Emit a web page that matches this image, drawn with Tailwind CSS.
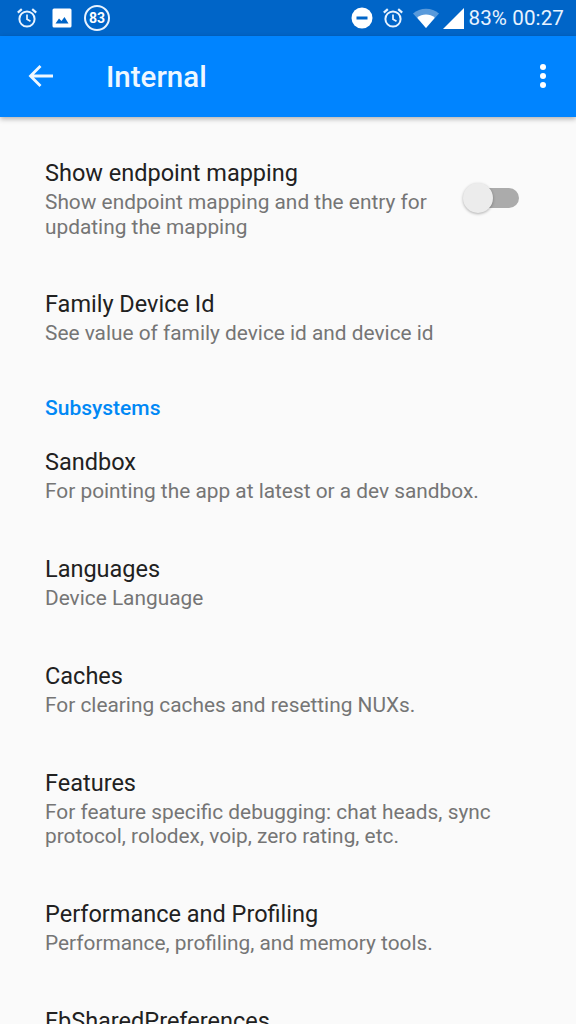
<!DOCTYPE html>
<html>
<head>
<meta charset="utf-8">
<script src="https://cdn.jsdelivr.net/npm/@tailwindcss/browser@4"></script>
</head>
<body class="m-0 bg-[#fafafa]">
<div class="w-[576px] h-[1024px] overflow-hidden flex flex-col font-['Roboto',sans-serif] bg-[#fafafa]">
  <div class="h-[36px] bg-[#0065c8] flex items-center justify-between pl-[16px] pr-[12px] shrink-0 text-white">
    <div class="flex items-center">
      <svg class="w-[22px] h-[22px]" viewBox="0 0 22 22" fill="none" stroke="#e8f3ff"><circle cx="11" cy="12" r="7.6" stroke-width="2"/><path d="M11 7.5V12.2L14.5 14.3" stroke-width="1.7"/><path d="M1.8 5.6L5.8 2.2M20.2 5.6L16.2 2.2" stroke-width="2.2"/></svg>
      <svg class="w-[20px] h-[20px] ml-[14px]" viewBox="0 0 20 20"><rect x="0.5" y="0.5" width="19" height="19" rx="1.5" fill="#fff"/><path d="M3.5 15.5L7 10.5L9.5 13L12.5 9L16.5 15.5Z" fill="#0065c8"/></svg>
      <div class="w-[26px] h-[26px] ml-[12px] rounded-full border-[2px] border-[#e8f3ff] flex items-center justify-center text-[14px] font-bold leading-none">83</div>
    </div>
    <div class="flex items-center">
      <svg class="w-[22px] h-[22px]" viewBox="0 0 22 22"><circle cx="11" cy="11" r="10.5" fill="#fff"/><rect x="5.5" y="9.5" width="11" height="3" fill="#0065c8"/></svg>
      <svg class="w-[22px] h-[22px] ml-[9px]" viewBox="0 0 22 22" fill="none" stroke="#e8f3ff"><circle cx="11" cy="12" r="7.6" stroke-width="2"/><path d="M11 7.5V12.2L14.5 14.3" stroke-width="1.7"/><path d="M1.8 5.6L5.8 2.2M20.2 5.6L16.2 2.2" stroke-width="2.2"/></svg>
      <svg class="w-[26px] h-[20px] ml-[9px]" viewBox="0 0 26 20"><path d="M0 5.5C7 -0.8 19 -0.8 26 5.5L13 20Z" fill="#fff" fill-opacity="0.35"/><path d="M4.2 9.8C9 5.5 17 5.5 21.8 9.8L13 20Z" fill="#fff"/></svg>
      <svg class="w-[21px] h-[21px] ml-[4px]" viewBox="0 0 21 21"><path d="M0 21L21 0V21Z" fill="#fff"/></svg>
      <span class="ml-[4px] text-[20.6px] leading-none text-[#e8f3ff] tracking-[0.1px]">83% 00:27</span>
    </div>
  </div>
  <div class="h-[81px] bg-[#0084ff] flex items-center shrink-0 relative shadow-[0_2px_5px_rgba(0,0,0,0.3)] text-white">
    <svg class="w-[26px] h-[24px] ml-[28px] mt-[-1px]" viewBox="0 0 26 24" fill="none" stroke="#eef7ff" stroke-width="2.8"><path d="M25 12H3M12.5 2L2.5 12L12.5 22"/></svg>
    <div class="ml-[52px] mt-[3px] text-[29.5px] font-medium leading-none text-[#eef7ff]">Internal</div>
    <div class="ml-auto mr-[30px] mt-[-2px] flex flex-col gap-[3px]">
      <div class="w-[6px] h-[6px] rounded-full bg-white"></div>
      <div class="w-[6px] h-[6px] rounded-full bg-white"></div>
      <div class="w-[6px] h-[6px] rounded-full bg-white"></div>
    </div>
  </div>
  <div class="pt-[16px] pl-[45px] flex flex-col">
    <div class="flex items-center pt-[25px] pb-[24px]">
      <div class="w-[410px]">
        <div class="text-[23.5px] leading-[30px] mb-[2px] text-[#212121]">Show endpoint mapping</div>
        <div class="text-[20.85px] leading-[25px] text-[#757575]">Show endpoint mapping and the entry for updating the mapping</div>
      </div>
      <div class="relative w-[56px] h-[30px] ml-[8px] mt-[-2px] flex items-center">
        <div class="ml-[4px] w-[52px] h-[20px] shrink-0 rounded-full bg-[#ababab]"></div>
        <div class="absolute left-0 top-0 w-[30px] h-[30px] rounded-full bg-[#ececec] shadow-[0_1px_3px_rgba(0,0,0,0.3)]"></div>
      </div>
    </div>
    <div class="py-[25px]">
      <div class="text-[23.5px] leading-[30px] mb-[2px] text-[#212121]">Family Device Id</div>
      <div class="text-[20.85px] leading-[25px] text-[#757575]">See value of family device id and device id</div>
    </div>
    <div class="h-[51px] pt-[25px] text-[21px] leading-[24px] font-medium text-[#0088f5]">Subsystems</div>
    <div class="py-[25px]">
      <div class="text-[23.5px] leading-[30px] mb-[2px] text-[#212121]">Sandbox</div>
      <div class="text-[20.85px] leading-[25px] text-[#757575]">For pointing the app at latest or a dev sandbox.</div>
    </div>
    <div class="py-[25px]">
      <div class="text-[23.5px] leading-[30px] mb-[2px] text-[#212121]">Languages</div>
      <div class="text-[20.85px] leading-[25px] text-[#757575]">Device Language</div>
    </div>
    <div class="py-[25px]">
      <div class="text-[23.5px] leading-[30px] mb-[2px] text-[#212121]">Caches</div>
      <div class="text-[20.85px] leading-[25px] text-[#757575]">For clearing caches and resetting NUXs.</div>
    </div>
    <div class="pt-[25px] pb-[26px] pr-[40px]">
      <div class="text-[23.5px] leading-[30px] mb-[2px] text-[#212121]">Features</div>
      <div class="text-[20.85px] leading-[24px] text-[#757575]">For feature specific debugging: chat heads, sync protocol, rolodex, voip, zero rating, etc.</div>
    </div>
    <div class="py-[25px]">
      <div class="text-[23.5px] leading-[30px] mb-[2px] text-[#212121]">Performance and Profiling</div>
      <div class="text-[20.85px] leading-[25px] text-[#757575]">Performance, profiling, and memory tools.</div>
    </div>
    <div class="pt-[25px]">
      <div class="text-[23.5px] leading-[30px] mb-[2px] text-[#212121]">FbSharedPreferences</div>
    </div>
  </div>
</div>
</body>
</html>
